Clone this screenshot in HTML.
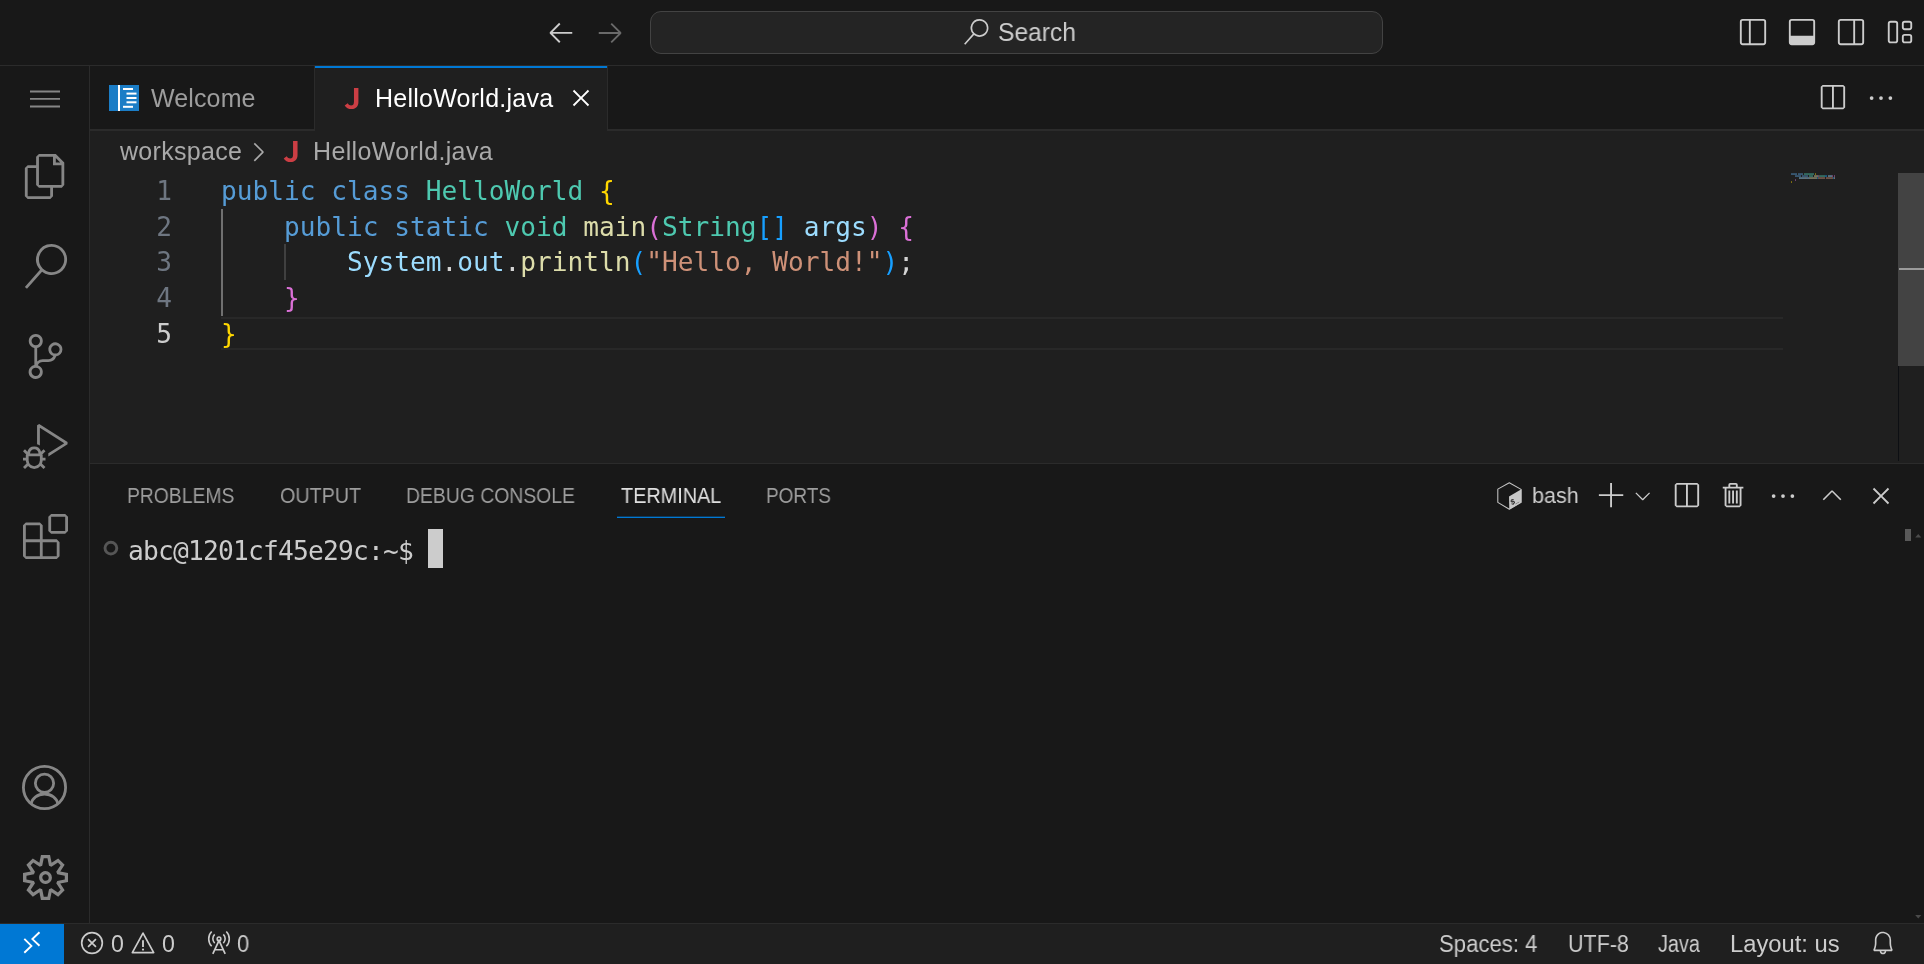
<!DOCTYPE html>
<html lang="en">
<head>
<meta charset="utf-8">
<title>HelloWorld.java - workspace</title>
<style>
html,body{margin:0;padding:0;background:#181818;overflow:hidden}
body{width:1924px;height:964px;position:relative;font-family:"Liberation Sans","DejaVu Sans",sans-serif;color:#ccc;-webkit-font-smoothing:antialiased}
.abs{position:absolute}
.t,.cl,.ln,#i_bash{will-change:transform}
.t{position:absolute;white-space:pre;line-height:30px;height:30px}
.ui{font-size:25px}
.mono{font-family:"DejaVu Sans Mono","Liberation Mono",monospace}
svg{position:absolute;overflow:visible}
/* regions */
#titlebar{left:0;top:0;width:1924px;height:65px;background:#181818;border-bottom:1px solid #2b2b2b}
#activity{left:0;top:66px;width:90px;height:857px;background:#181818;border-right:1px solid #2b2b2b;box-sizing:border-box}
#tabs{left:90px;top:66px;width:1834px;height:63px;background:#181818;border-bottom:2px solid #2b2b2b}
#editor{left:90px;top:131px;width:1834px;height:332px;background:#1f1f1f}
#panel{left:90px;top:463px;width:1834px;height:460px;background:#181818;border-top:1px solid #2b2b2b;box-sizing:border-box}
#status{left:0;top:923px;width:1924px;height:41px;background:#1f1f1f;border-top:1px solid #2b2b2b;box-sizing:border-box}

.ic{fill:currentColor}
.st{fill:none;stroke:currentColor}
/* editor */
.ln{position:absolute;left:90px;width:82px;text-align:right;font-size:26.16px;line-height:36px;height:36px;color:#6e7681}
.cl{position:absolute;left:221px;white-space:pre;font-size:26.16px;line-height:36px;height:36px;color:#d4d4d4}
.k{color:#569cd6}.ty{color:#4ec9b0}.fn{color:#dcdcaa}.v{color:#9cdcfe}.s{color:#ce9178}
.b1{color:#ffd700}.b2{color:#da70d6}.b3{color:#179fff}
.ptab{transform-origin:0 0;font-size:21.500px;color:#9d9d9d;line-height:26px;height:26px;top:483px}
.sb{transform-origin:0 0;font-size:23px;color:#ccc;line-height:28px;height:28px;top:930px}
</style>
</head>
<body>

<div id="titlebar" class="abs">
 <svg id="i_al" style="left:545.900px;top:17.200px;color:#ccc" width="30" height="30" viewBox="0 0 16 16"><path class="ic" d="M7 3.093l-5 5V8.8l5 5 .707-.707-4.146-4.147H14v-1H3.56L7.708 3.8 7 3.093z"/></svg>
 <svg id="i_ar" style="left:595px;top:17.200px;color:#6a6a6a" width="30" height="30" viewBox="0 0 16 16"><path class="ic" d="M9 13.887l5-5V8.18l-5-5-.707.707 4.146 4.147H2v1h10.44L8.292 13.18l.707.707z"/></svg>
 <div class="abs" style="left:650px;top:11px;width:733px;height:43px;box-sizing:border-box;background:#242424;border:1px solid #434343;border-radius:11px"></div>
 <svg id="i_search" style="left:963.400px;top:19.300px;color:#ccc" width="26" height="26" viewBox="0 0 16 16"><path class="ic" d="M15.25 0a8.25 8.25 0 0 0-6.18 13.72L1 22.88l1.12 1 8.05-9.12A8.251 8.251 0 1 0 15.25.01V0zm0 15a6.75 6.75 0 1 1 0-13.5 6.75 6.75 0 0 1 0 13.5z" transform="scale(.6667)"/></svg>
 <span id="t_search" class="t ui" style="left:998.02px;top:17px;color:#ccc;transform-origin:0 0;transform:scaleX(0.9844)">Search</span>
 <!-- layout controls -->
 <svg id="i_l1" style="left:1738px;top:17px;color:#ccc" width="30" height="30" viewBox="0 0 16 16"><rect class="st" x="1.5" y="1.5" width="13" height="13" rx="1" stroke-width="1"/><path class="st" d="M6.300 1.500v13" stroke-width="1"/></svg>
 <svg id="i_l2" style="left:1787px;top:17px;color:#ccc" width="30" height="30" viewBox="0 0 16 16"><rect class="st" x="1.5" y="1.5" width="13" height="13" rx="1" stroke-width="1"/><path class="ic" d="M1.5 10h13v3.5a1 1 0 0 1-1 1h-11a1 1 0 0 1-1-1z"/></svg>
 <svg id="i_l3" style="left:1836px;top:17px;color:#ccc" width="30" height="30" viewBox="0 0 16 16"><rect class="st" x="1.5" y="1.5" width="13" height="13" rx="1" stroke-width="1"/><path class="st" d="M9.700 1.500v13" stroke-width="1"/></svg>
 <svg id="i_l4" style="left:1885px;top:17px;color:#ccc" width="30" height="30" viewBox="0 0 16 16"><rect class="st" x="2" y="2.5" width="4.5" height="11" rx="1"/><rect class="st" x="9.5" y="2.5" width="4.5" height="4" rx="1"/><rect class="st" x="9.5" y="9.5" width="4.5" height="4" rx="1"/></svg>
</div>


<div id="activity" class="abs" style="color:#868686">
 <svg style="left:30px;top:17px" width="30" height="30" viewBox="0 0 16 16"><path class="ic" d="M16 5H0V4h16v1zm0 8H0v-1h16v1zm0-4.008H0V8h16v.992z"/></svg>
 <svg style="left:22.5px;top:87.5px" width="45" height="45" viewBox="0 0 24 24"><path class="ic" d="M17.5 0h-9L7 1.5V6H2.5L1 7.5v15.07L2.5 24h12.07L16 22.57V18h4.7l1.3-1.43V4.5L17.5 0zm0 2.12l2.38 2.38H17.5V2.12zm-3 20.38h-12v-15H7v9.07L8.5 18h6v4.5zm6-6h-12v-15H16V6h4.500v10.5z"/></svg>
 <svg style="left:22.5px;top:177.500px" width="45" height="45" viewBox="0 0 24 24"><path class="ic" d="M15.250 0a8.250 8.250 0 0 0-6.180 13.720L1 22.880l1.120 1 8.050-9.120A8.251 8.251 0 1 0 15.250.010V0zm0 15a6.750 6.750 0 1 1 0-13.500 6.750 6.750 0 0 1 0 13.500z"/></svg>
 <svg style="left:22.5px;top:267.500px" width="45" height="45" viewBox="0 0 24 24"><path class="ic" d="M21.007 8.222A3.738 3.738 0 0 0 15.045 5.200a3.737 3.737 0 0 0 1.156 6.583 2.988 2.988 0 0 1-2.668 1.670h-2.990a4.456 4.456 0 0 0-2.989 1.165V7.400a3.737 3.737 0 1 0-1.494 0v9.117a3.776 3.776 0 1 0 1.816.099 2.990 2.990 0 0 1 2.668-1.667h2.990a4.484 4.484 0 0 0 4.223-3.039 3.736 3.736 0 0 0 3.250-3.687zM4.565 3.738a2.242 2.242 0 1 1 4.484 0 2.242 2.242 0 0 1-4.484 0zm4.484 16.441a2.242 2.242 0 1 1-4.484 0 2.242 2.242 0 0 1 4.484 0zm8.221-9.715a2.242 2.242 0 1 1 0-4.485 2.242 2.242 0 0 1 0 4.485z"/></svg>
 <svg style="left:22.5px;top:357.500px" width="45" height="45" viewBox="0 0 24 24"><path class="ic" d="M10.940 13.500l-1.320 1.320a3.730 3.730 0 0 0-7.240 0L1.060 13.500 0 14.560l1.720 1.720-.220.220V18H0v1.500h1.500v.080c.077.489.214.966.410 1.420L0 22.940 1.060 24l1.650-1.650A4.308 4.308 0 0 0 6 24a4.310 4.310 0 0 0 3.290-1.650L10.940 24 12 22.940 10.090 21c.198-.464.336-.951.410-1.450v-.100H12V18h-1.500v-1.500l-.220-.220L12 14.560l-1.060-1.060zM6 13.500a2.250 2.250 0 0 1 2.250 2.250h-4.500A2.250 2.250 0 0 1 6 13.500zm3 6a3.330 3.330 0 0 1-3 3 3.330 3.330 0 0 1-3-3v-2.250h6v2.250zm14.760-9.900v1.260L13.500 17.370V15.600l8.500-5.370L9 2v9.460a5.070 5.070 0 0 0-1.500-.720V.630L8.640 0l15.120 9.600z"/></svg>
 <svg style="left:22.5px;top:447.500px" width="45" height="45" viewBox="0 0 24 24"><path class="ic" d="M13.500 1.500L15 0h7.500L24 1.500V9l-1.500 1.500H15L13.500 9V1.500zm1.500 0V9h7.500V1.500H15zM0 15V6l1.500-1.500H9L10.500 6v7.500H18l1.500 1.500v7.500L18 24H1.500L0 22.500V15zm9-1.500V6H1.500v7.500H9zM9 15H1.500v7.500H9V15zm1.500 7.500H18V15h-7.500v7.500z"/></svg>
 <svg style="left:22px;top:699px" width="45" height="45" viewBox="0 0 16 16"><circle class="st" cx="8" cy="8" r="7.500" stroke-width="1"/><circle class="st" cx="8" cy="6.500" r="3.250" stroke-width="1"/><path class="st" d="M3.200 13.900c.400-2.100 2.300-3.600 4.800-3.600s4.400 1.500 4.800 3.600" stroke-width="1"/></svg>
 <svg style="left:22.5px;top:789px" width="45" height="45" viewBox="0 0 24 24"><path class="ic" d="M19.850 8.750l4.150.830v4.840l-4.150.830 2.350 3.520-3.430 3.430-3.520-2.350-.830 4.150H9.580l-.830-4.150-3.520 2.350-3.430-3.430 2.350-3.520L0 14.420V9.580l4.150-.830L1.800 5.230 5.230 1.800l3.520 2.350L9.580 0h4.840l.830 4.150 3.520-2.350 3.430 3.430-2.350 3.520zm-1.570 5.070l4-.810v-2l-4-.810-.540-1.300 2.290-3.430-1.430-1.430-3.430 2.290-1.300-.540-.810-4h-2l-.810 4-1.300.540-3.430-2.290-1.430 1.430L6.380 8.900l-.540 1.300-4 .810v2l4 .810.540 1.300-2.290 3.430 1.430 1.430 3.430-2.290 1.300.540.810 4h2l.810-4 1.300-.540 3.430 2.290 1.430-1.430-2.290-3.430.540-1.300zm-8.186-4.672A3.430 3.430 0 0 1 12 8.570 3.440 3.440 0 0 1 15.430 12a3.430 3.430 0 1 1-5.336-2.852zm.956 4.274c.281.188.612.288.950.288A1.700 1.700 0 0 0 13.710 12a1.710 1.710 0 1 0-2.660 1.422z"/></svg>
</div>


<div id="tabs" class="abs"></div>
<div class="abs" style="left:90px;top:66px;width:224px;height:65px;border-right:1px solid #2b2b2b"></div>
<div class="abs" style="left:315px;top:66px;width:292px;height:65px;background:#1f1f1f;border-right:1px solid #2b2b2b"></div>
<div class="abs" style="left:315px;top:66px;width:292px;height:2px;background:#0078d4"></div>
<svg style="left:109px;top:85px" width="30" height="26" viewBox="0 0 30 26"><rect width="30" height="26" fill="#1b7dc6"/><rect x="9" y="0" width="2" height="26" fill="#fff"/><rect x="14" y="3" width="10" height="2" fill="#fff"/><rect x="17.500" y="7.600" width="10" height="2" fill="#fff"/><rect x="17.500" y="12" width="10" height="2" fill="#fff"/><rect x="17.500" y="16.300" width="10" height="2" fill="#fff"/><rect x="14" y="20.800" width="10" height="2" fill="#fff"/></svg>
<span id="t_welcome" class="t ui" style="left:150.500px;top:83px;color:#9d9d9d;letter-spacing:.13px">Welcome</span>
<span id="t_j1" class="t" style="left:344.200px;top:77px;color:#cc3e44;font-size:28px;font-weight:700;font-family:'Noto Sans CJK SC','Liberation Sans',sans-serif;transform-origin:0 0;transform:scaleX(1.07);line-height:40px;height:40px">J</span>
<span id="t_hw1" class="t ui" style="left:375.300px;top:83px;color:#fff;letter-spacing:.25px">HelloWorld.java</span>
<svg id="i_close1" style="left:566px;top:83px;color:#fff" width="30" height="30" viewBox="0 0 16 16"><path class="ic" d="M8 8.707l3.646 3.647.708-.707L8.707 8l3.647-3.646-.707-.708L8 7.293 4.354 3.646l-.707.708L7.293 8l-3.646 3.646.707.708L8 8.707z"/></svg>
<svg id="i_split1" style="left:1817px;top:83px;color:#ccc" width="30" height="30" viewBox="0 0 16 16"><path class="ic" d="M14 1H3L2 2v11l1 1h11l1-1V2l-1-1zM8 13H3V2h5v11zm6 0H9V2h5v11z"/></svg>
<svg id="i_dots1" style="left:1866px;top:83px;color:#ccc" width="30" height="30" viewBox="0 0 16 16"><path class="ic" d="M4 8a1 1 0 1 1-2 0 1 1 0 0 1 2 0zm5 0a1 1 0 1 1-2 0 1 1 0 0 1 2 0zm5 0a1 1 0 1 1-2 0 1 1 0 0 1 2 0z"/></svg>


<div id="editor" class="abs"></div>
<span id="t_ws" class="t ui" style="left:119.800px;top:136.200px;color:#a9a9a9;letter-spacing:.31px">workspace</span>
<svg id="i_chev" style="left:242.800px;top:137px;color:#a9a9a9" width="30" height="30" viewBox="0 0 16 16"><path class="ic" d="M10.072 8.024L5.715 3.667l.618-.62L11 7.716v.618L6.333 13l-.618-.619 4.357-4.357z"/></svg>
<span id="t_j2" class="t" style="left:282.900px;top:130px;color:#cc3e44;font-size:28px;font-weight:700;font-family:'Noto Sans CJK SC','Liberation Sans',sans-serif;transform-origin:0 0;transform:scaleX(1.08);line-height:40px;height:40px">J</span>
<span id="t_hw2" class="t ui" style="left:313px;top:136.200px;color:#a9a9a9;letter-spacing:.36px">HelloWorld.java</span>
<!-- current line highlight -->
<div class="abs" style="left:221px;top:317px;width:1562px;height:29px;border-top:2px solid #282828;border-bottom:2px solid #282828"></div>
<!-- indent guides -->
<div class="abs" style="left:221px;top:209px;width:2px;height:107px;background:#707070"></div>
<div class="abs" style="left:284px;top:244px;width:2px;height:36px;background:#404040"></div>
<div class="ln mono" style="top:173px">1</div>
<div class="ln mono" style="top:209px">2</div>
<div class="ln mono" style="top:244px">3</div>
<div class="ln mono" style="top:280px">4</div>
<div class="ln mono" style="top:316px;color:#ccc">5</div>
<div class="cl mono" style="top:173px"><span class="k">public</span> <span class="k">class</span> <span class="ty">HelloWorld</span> <span class="b1">{</span></div>
<div class="cl mono" style="top:209px">    <span class="k">public</span> <span class="k">static</span> <span class="ty">void</span> <span class="fn">main</span><span class="b2">(</span><span class="ty">String</span><span class="b3">[]</span> <span class="v">args</span><span class="b2">)</span> <span class="b2">{</span></div>
<div class="cl mono" style="top:244px">        <span class="v">System</span>.<span class="v">out</span>.<span class="fn">println</span><span class="b3">(</span><span class="s">"Hello, World!"</span><span class="b3">)</span>;</div>
<div class="cl mono" style="top:280px">    <span class="b2">}</span></div>
<div class="cl mono" style="top:316px"><span class="b1">}</span></div>
<!-- minimap + scrollbar -->
<svg style="left:1791px;top:172.800px;opacity:.55" width="46" height="10" viewBox="0 0 46 10"><rect x="0" y="0.3" width="6" height="1.500" fill="#569cd6"/><rect x="7" y="0.3" width="5" height="1.500" fill="#569cd6"/><rect x="13" y="0.3" width="10" height="1.500" fill="#4ec9b0"/><rect x="24" y="0.3" width="1" height="1.500" fill="#ffd700"/><rect x="4" y="2.3" width="6" height="1.500" fill="#569cd6"/><rect x="11" y="2.3" width="6" height="1.500" fill="#569cd6"/><rect x="18" y="2.3" width="4" height="1.500" fill="#4ec9b0"/><rect x="23" y="2.3" width="4" height="1.500" fill="#dcdcaa"/><rect x="27" y="2.3" width="1" height="1.500" fill="#da70d6"/><rect x="28" y="2.3" width="6" height="1.500" fill="#4ec9b0"/><rect x="34" y="2.3" width="2" height="1.500" fill="#179fff"/><rect x="37" y="2.3" width="4" height="1.500" fill="#9cdcfe"/><rect x="41" y="2.3" width="1" height="1.500" fill="#da70d6"/><rect x="43" y="2.3" width="1" height="1.500" fill="#da70d6"/><rect x="8" y="4.3" width="6" height="1.500" fill="#9cdcfe"/><rect x="14" y="4.3" width="1" height="1.500" fill="#d4d4d4"/><rect x="15" y="4.3" width="3" height="1.500" fill="#9cdcfe"/><rect x="18" y="4.3" width="1" height="1.500" fill="#d4d4d4"/><rect x="19" y="4.3" width="7" height="1.500" fill="#dcdcaa"/><rect x="26" y="4.3" width="1" height="1.500" fill="#179fff"/><rect x="27" y="4.3" width="7" height="1.500" fill="#ce9178"/><rect x="35" y="4.3" width="7" height="1.500" fill="#ce9178"/><rect x="42" y="4.3" width="1" height="1.500" fill="#179fff"/><rect x="43" y="4.3" width="1" height="1.500" fill="#d4d4d4"/><rect x="4" y="6.3" width="1" height="1.500" fill="#da70d6"/><rect x="0" y="8.3" width="1" height="1.500" fill="#ffd700"/></svg>

<div class="abs" style="left:1898px;top:366px;width:1px;height:95px;background:#0d0f13"></div>
<div class="abs" style="left:1898px;top:173px;width:26px;height:193px;background:#434343"></div>
<div class="abs" style="left:1899px;top:268px;width:25px;height:2px;background:#9a9a9a"></div>


<div id="panel" class="abs"></div>
<span id="t_p1" class="t ptab" style="left:126.85px;transform:scaleX(0.8983)">PROBLEMS</span>
<span id="t_p2" class="t ptab" style="left:280.07px;transform:scaleX(0.9170)">OUTPUT</span>
<span id="t_p3" class="t ptab" style="left:406.10px;transform:scaleX(0.9005)">DEBUG CONSOLE</span>
<span id="t_p4" class="t ptab" style="left:620.71px;color:#e0e0e0;transform:scaleX(0.9220)">TERMINAL</span>
<span id="t_p5" class="t ptab" style="left:766.12px;transform:scaleX(0.8820)">PORTS</span>
<div class="abs" style="left:617px;top:517px;width:108px;height:1px;background:#0078d4"></div><div class="abs" style="left:617px;top:516px;width:108px;height:1px;background:#0078d4;opacity:.35"></div>
<!-- panel actions -->
<svg id="i_bash" style="left:1495px;top:480px;color:#c4c4c4" width="30" height="32" viewBox="0 0 30 32"><path class="st" d="M14.300 2.700L26.100 9.400V22.400L14.300 29.300 2.800 22.400V9.100z" stroke-width="1.050" stroke-linejoin="round"/><path d="M26.400 9.200V22.600L14.300 29.600 14 16.400z" fill="#c8c8c8"/><text x="19.600" y="23.700" font-family="Liberation Sans, sans-serif" font-size="7.500" font-weight="bold" fill="#181818" transform="rotate(-28 19.600 23.700) skewX(-8)">$_</text></svg>
<span id="t_bash" class="t" style="left:1531.04px;top:482px;font-size:22.500px;line-height:28px;height:28px;color:#ccc;transform:scaleX(0.9574)">bash</span>
<svg id="i_plus" style="left:1596.500px;top:481.250px;color:#ccc" width="30" height="30" viewBox="0 0 16 16"><path class="ic" d="M14 7v1H8v6H7V8H1V7h6V1h1v6h6z"/></svg>
<svg id="i_chd" style="left:1630.800px;top:484.400px;color:#ccc;width:23.500px;height:23.500px" width="23.5" height="23.5" viewBox="0 0 16 16"><path class="ic" d="M7.976 10.072l4.357-4.357.62.618L8.284 11h-.618L3 6.333l.619-.618 4.357 4.357z"/></svg>
<svg id="i_split2" style="left:1671px;top:481px;color:#ccc" width="30" height="30" viewBox="0 0 16 16"><path class="ic" d="M14 1H3L2 2v11l1 1h11l1-1V2l-1-1zM8 13H3V2h5v11zm6 0H9V2h5v11z"/></svg>
<svg id="i_trash" style="left:1718.600px;top:481.250px;color:#ccc" width="30" height="30" viewBox="0 0 16 16"><path class="ic" d="M10 3h3v1h-1v9l-1 1H4l-1-1V4H2V3h3V2a1 1 0 0 1 1-1h3a1 1 0 0 1 1 1v1zM9 2H6v1h3V2zM4 13h7V4H4v9zm2-8H5v7h1V5zm1 0h1v7H7V5zm2 0h1v7H9V5z"/></svg>
<svg id="i_dots2" style="left:1768.400px;top:481.250px;color:#ccc" width="30" height="30" viewBox="0 0 16 16"><path class="ic" d="M4 8a1 1 0 1 1-2 0 1 1 0 0 1 2 0zm5 0a1 1 0 1 1-2 0 1 1 0 0 1 2 0zm5 0a1 1 0 1 1-2 0 1 1 0 0 1 2 0z"/></svg>
<svg id="i_chu" style="left:1817px;top:481px;color:#ccc" width="30" height="30" viewBox="0 0 16 16"><path class="ic" d="M8.024 5.928l-4.357 4.357-.62-.618L7.716 5h.618L13 9.667l-.619.618-4.357-4.357z"/></svg>
<svg id="i_close2" style="left:1866px;top:481.250px;color:#ccc" width="30" height="30" viewBox="0 0 16 16"><path class="ic" d="M8 8.707l3.646 3.647.708-.707L8.707 8l3.647-3.646-.707-.708L8 7.293 4.354 3.646l-.707.708L7.293 8l-3.646 3.646.707.708L8 8.707z"/></svg>
<!-- terminal -->
<svg style="left:101px;top:538px" width="20" height="20" viewBox="0 0 20 20"><circle cx="9.900" cy="10.100" r="5.900" fill="none" stroke="#565656" stroke-width="2.900"/></svg>
<span id="t_term" class="t mono" style="left:128px;top:531.500px;font-size:26.250px;line-height:39px;height:39px;color:#ccc;letter-spacing:-.800px">abc@1201cf45e29c:~$</span>
<div class="abs" style="left:428px;top:529px;width:15px;height:39px;background:#ccc"></div>
<div class="abs" style="left:1905px;top:529px;width:6px;height:12px;background:#595959"></div>
<svg style="left:1915px;top:533.500px" width="6.500" height="3.500" viewBox="0 0 7 4"><path d="M0 4L3.500 0 7 4z" fill="#4a4a4a"/></svg>
<svg style="left:1915px;top:915px" width="6.500" height="3.500" viewBox="0 0 7 4"><path d="M0 0L3.500 4 7 0z" fill="#4a4a4a"/></svg>


<div id="status" class="abs"></div>
<div class="abs" style="left:0;top:924px;width:64px;height:40px;background:#0078d4"></div>
<svg id="i_remote" style="left:17px;top:928px;color:#fff" width="30" height="30" viewBox="0 0 30 30"><path class="st" d="M7.300 10.900L14.400 17.900 7.300 24.700" stroke-width="1.900"/><path class="st" d="M22.500 4.300L15.400 11.100 22.500 17.700" stroke-width="1.900"/></svg>
<svg id="i_err" style="left:76.500px;top:928px;color:#ccc" width="30" height="30" viewBox="0 0 16 16"><circle class="st" cx="8" cy="8" r="5.500" stroke-width=".9"/><path class="st" d="M5.900 5.900l4.200 4.200M10.100 5.900l-4.200 4.200" stroke-width=".9"/></svg>
<span id="t_s1" class="t sb" style="left:110.90px;transform:scaleX(1.0084)">0</span>
<svg id="i_warn" style="left:127.700px;top:927.500px;color:#ccc" width="30" height="30" viewBox="0 0 16 16"><path class="st" d="M8 2.700L13.700 13.100H2.300z" stroke-width=".9" stroke-linejoin="round"/><path class="st" d="M8 6.500v3.600" stroke-width="1"/><circle class="ic" cx="8" cy="11.500" r=".6"/></svg>
<span id="t_s2" class="t sb" style="left:161.80px;transform:scaleX(1.0084)">0</span>
<svg id="i_radio" style="left:203.500px;top:928px;color:#ccc" width="30" height="30" viewBox="0 0 16 16"><path class="st" d="M4.700 13.800L8 6.700l3.300 7.100M5.900 11.600h4.200" stroke-width=".9"/><circle class="st" cx="8" cy="5.800" r="1" stroke-width=".8"/><path class="st" d="M5.700 8.100a3.300 3.300 0 0 1 0-4.700M10.300 8.100a3.300 3.300 0 0 0 0-4.700M4.100 9.700a5.600 5.600 0 0 1 0-7.800M11.900 9.700a5.600 5.600 0 0 0 0-7.800" stroke-width=".85"/></svg>
<span id="t_s3" class="t sb" style="left:236.84px;transform:scaleX(0.9545)">0</span>
<span id="t_s4" class="t sb" style="left:1439.42px;transform:scaleX(0.9621)">Spaces: 4</span>
<span id="t_s5" class="t sb" style="left:1567.86px;transform:scaleX(0.9357)">UTF-8</span>
<span id="t_s6" class="t sb" style="left:1658.38px;transform:scaleX(0.8630)">Java</span>
<span id="t_s7" class="t sb" style="left:1729.76px;transform:scaleX(1.0330)">Layout: us</span>
<svg id="i_bell" style="left:1870px;top:929.600px;color:#ccc" width="26" height="26" viewBox="0 0 16 16"><path class="ic" d="M13.377 10.573a7.630 7.630 0 0 1-.383-2.380V6.195a5.115 5.115 0 0 0-1.268-3.446 5.138 5.138 0 0 0-3.242-1.722c-.694-.072-1.400 0-2.070.227-.670.215-1.280.574-1.794 1.053a4.923 4.923 0 0 0-1.208 1.675 5.067 5.067 0 0 0-.431 2.022v2.200a7.610 7.610 0 0 1-.383 2.370L2 12.343l.479.658h3.505c0 .526.215 1.040.586 1.412.370.370.885.586 1.412.586.526 0 1.040-.215 1.411-.586s.587-.886.587-1.412h3.505l.478-.658-.586-1.770zm-4.690 3.147a.997.997 0 0 1-.705.299.997.997 0 0 1-.706-.300.997.997 0 0 1-.300-.705h1.999a.939.939 0 0 1-.287.706zm-5.515-1.710l.371-1.114a8.633 8.633 0 0 0 .443-2.691V6.004c0-.563.120-1.113.347-1.616.227-.514.550-.969.969-1.340.419-.382.910-.670 1.436-.837.538-.180 1.100-.240 1.650-.180a4.147 4.147 0 0 1 2.597 1.400 4.133 4.133 0 0 1 1.004 2.776v2.010c0 .909.144 1.818.443 2.691l.371 1.113h-9.630v-.012z"/></svg>

</body>
</html>
